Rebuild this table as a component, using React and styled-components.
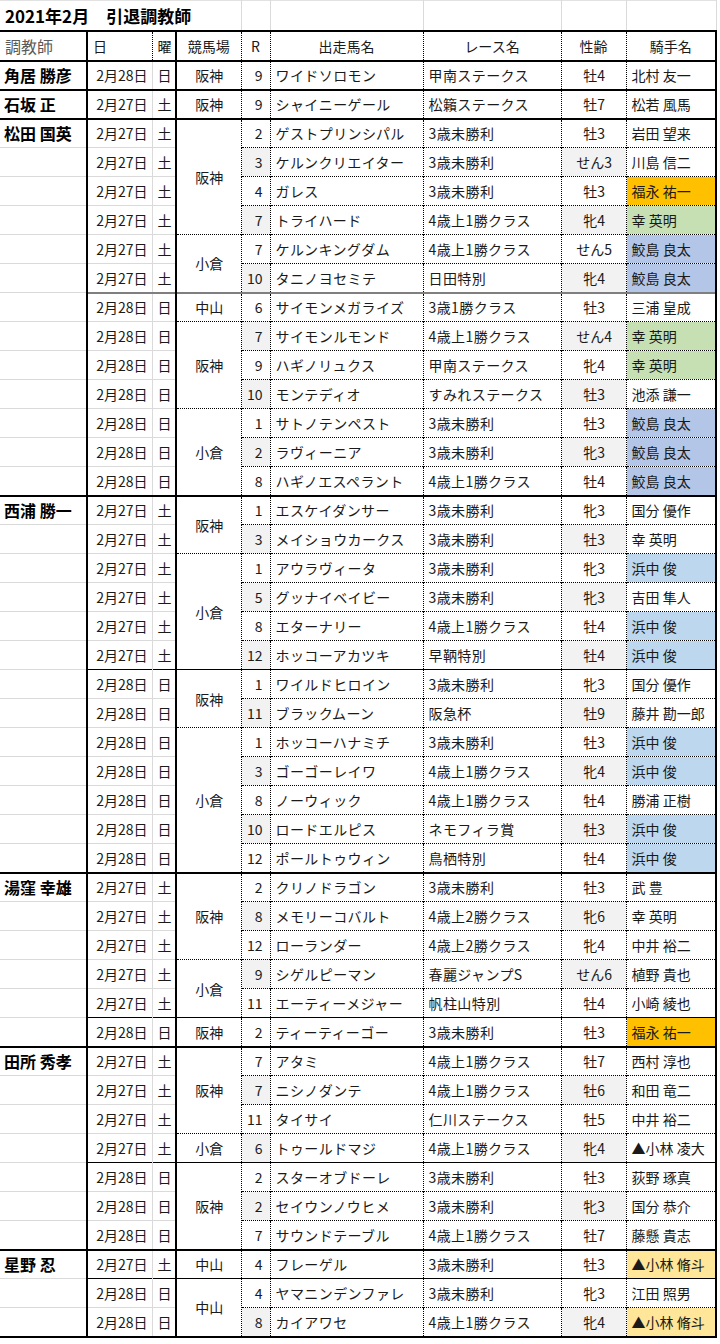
import React from 'react';
import styled, { createGlobalStyle } from 'styled-components';

const GlobalStyle = createGlobalStyle`
  body {
    margin: 0;
    background: #fff;
    font-family: "Noto Sans CJK JP", "Noto Sans", sans-serif;
    color: #1a1a1a;
  }
`;

const widths = [87, 65, 24, 65, 29, 153, 138, 65, 90];
const aligns = ['left', 'right', 'center', 'center', 'right', 'left', 'left', 'center', 'left'];
const rightLines = [
  '2px solid #000',
  '1px solid #dadada',
  '2px solid #000',
  '1px dotted #000',
  '1px dotted #000',
  '1px dotted #000',
  '1px dotted #000',
  '1px dotted #000',
  '2px solid #000',
];
const headRightLines = [
  '2px solid #000',
  '1px dotted #000',
  '2px solid #000',
  '1px dotted #000',
  '1px dotted #000',
  '1px dotted #000',
  '1px dotted #000',
  '1px dotted #000',
  '2px solid #000',
];
const fills = {
  o: '#ffc000',
  g: '#c6e0b4',
  b: '#b4c6e7',
  s: '#bdd7ee',
  y: '#ffe699',
};

const topLine = (col, edge) => {
  if (edge === 'trainer') return '2px solid #000';
  if (edge === 'date' && col > 0) return '1px solid #000';
  if (edge === 'dateStrong' && col > 0) return '2px solid #7f7f7f';
  if (col <= 2) return '1px solid #dadada';
  return '1px dotted #000';
};

const Sheet = styled.table`
  border-collapse: collapse;
  table-layout: fixed;
  width: 716px;
  border-bottom: 2px solid #000;
`;

const Col = styled.col`
  width: ${(p) => p.$w}px;
`;

const Row = styled.tr`
  height: ${(p) => p.$h}px;
`;

const TitleCell = styled.td`
  padding: 0 5px;
  font-size: 17px;
  font-weight: 700;
  color: #000;
  white-space: nowrap;
  border-top: 1px solid #e2e2e2;
  border-right: 1px solid #dadada;
`;

const BlankCell = styled.td`
  border-top: 1px solid #e2e2e2;
  border-right: 1px solid #dadada;
`;

const HeadCell = styled.th`
  padding: 0 5px;
  font-size: 14px;
  font-weight: 400;
  color: ${(p) => (p.$muted ? '#5a5a5a' : '#1a1a1a')};
  font-size: ${(p) => (p.$muted ? 16 : 14)}px;
  text-align: ${(p) => p.$align};
  border-top: 2px solid #000;
  border-right: ${(p) => headRightLines[p.$col]};
  white-space: nowrap;
`;

const Cell = styled.td`
  padding: 0 ${(p) => (p.$col === 4 ? 7 : 4)}px 0 ${(p) => (p.$col === 0 ? 4 : 5)}px;
  font-size: 14px;
  letter-spacing: ${(p) => (p.$col === 5 || p.$col === 6 ? '0.4px' : '0')};
  text-align: ${(p) => aligns[p.$col]};
  vertical-align: middle;
  white-space: nowrap;
  overflow: hidden;
  border-top: ${(p) => topLine(p.$col, p.$edge)};
  border-right: ${(p) => rightLines[p.$col]};
  background: ${(p) => (p.$fill ? fills[p.$fill] : p.$shade ? '#f2f2f2' : '#fff')};
`;

const TrainerName = styled.span`
  font-size: 16px;
  font-weight: 700;
  color: #000;
`;

const data = [
  {
    trainer: '角居 勝彦',
    groups: [
      { date: '2月28日', day: '日', venues: [{ name: '阪神', races: [['9', 'ワイドソロモン', '甲南ステークス', '牡4', '北村 友一']] }] },
    ],
  },
  {
    trainer: '石坂 正',
    groups: [
      { date: '2月27日', day: '土', venues: [{ name: '阪神', races: [['9', 'シャイニーゲール', '松籟ステークス', '牡7', '松若 風馬']] }] },
    ],
  },
  {
    trainer: '松田 国英',
    groups: [
      {
        date: '2月27日',
        day: '土',
        venues: [
          {
            name: '阪神',
            races: [
              ['2', 'ゲストプリンシパル', '3歳未勝利', '牡3', '岩田 望来'],
              ['3', 'ケルンクリエイター', '3歳未勝利', 'せん3', '川島 信二'],
              ['4', 'ガレス', '3歳未勝利', '牡3', '福永 祐一', 'o'],
              ['7', 'トライハード', '4歳上1勝クラス', '牝4', '幸 英明', 'g'],
            ],
          },
          {
            name: '小倉',
            races: [
              ['7', 'ケルンキングダム', '4歳上1勝クラス', 'せん5', '鮫島 良太', 'b'],
              ['10', 'タニノヨセミテ', '日田特別', '牝4', '鮫島 良太', 'b'],
            ],
          },
        ],
      },
      {
        date: '2月28日',
        day: '日',
        strong: true,
        venues: [
          { name: '中山', races: [['6', 'サイモンメガライズ', '3歳1勝クラス', '牡3', '三浦 皇成']] },
          {
            name: '阪神',
            races: [
              ['7', 'サイモンルモンド', '4歳上1勝クラス', 'せん4', '幸 英明', 'g'],
              ['9', 'ハギノリュクス', '甲南ステークス', '牝4', '幸 英明', 'g'],
              ['10', 'モンテディオ', 'すみれステークス', '牡3', '池添 謙一'],
            ],
          },
          {
            name: '小倉',
            races: [
              ['1', 'サトノテンペスト', '3歳未勝利', '牡3', '鮫島 良太', 'b'],
              ['2', 'ラヴィーニア', '3歳未勝利', '牝3', '鮫島 良太', 'b'],
              ['8', 'ハギノエスペラント', '4歳上1勝クラス', '牡4', '鮫島 良太', 'b'],
            ],
          },
        ],
      },
    ],
  },
  {
    trainer: '西浦 勝一',
    groups: [
      {
        date: '2月27日',
        day: '土',
        venues: [
          {
            name: '阪神',
            races: [
              ['1', 'エスケイダンサー', '3歳未勝利', '牝3', '国分 優作'],
              ['3', 'メイショウカークス', '3歳未勝利', '牡3', '幸 英明'],
            ],
          },
          {
            name: '小倉',
            races: [
              ['1', 'アウラヴィータ', '3歳未勝利', '牝3', '浜中 俊', 's'],
              ['5', 'グッナイベイビー', '3歳未勝利', '牝3', '吉田 隼人'],
              ['8', 'エターナリー', '4歳上1勝クラス', '牡4', '浜中 俊', 's'],
              ['12', 'ホッコーアカツキ', '早鞆特別', '牡4', '浜中 俊', 's'],
            ],
          },
        ],
      },
      {
        date: '2月28日',
        day: '日',
        venues: [
          {
            name: '阪神',
            races: [
              ['1', 'ワイルドヒロイン', '3歳未勝利', '牝3', '国分 優作'],
              ['11', 'ブラックムーン', '阪急杯', '牡9', '藤井 勘一郎'],
            ],
          },
          {
            name: '小倉',
            races: [
              ['1', 'ホッコーハナミチ', '3歳未勝利', '牡3', '浜中 俊', 's'],
              ['3', 'ゴーゴーレイワ', '4歳上1勝クラス', '牝4', '浜中 俊', 's'],
              ['8', 'ノーウィック', '4歳上1勝クラス', '牡4', '勝浦 正樹'],
              ['10', 'ロードエルピス', 'ネモフィラ賞', '牡3', '浜中 俊', 's'],
              ['12', 'ポールトゥウィン', '鳥栖特別', '牡4', '浜中 俊', 's'],
            ],
          },
        ],
      },
    ],
  },
  {
    trainer: '湯窪 幸雄',
    groups: [
      {
        date: '2月27日',
        day: '土',
        venues: [
          {
            name: '阪神',
            races: [
              ['2', 'クリノドラゴン', '3歳未勝利', '牡3', '武 豊'],
              ['8', 'メモリーコバルト', '4歳上2勝クラス', '牝6', '幸 英明'],
              ['12', 'ローランダー', '4歳上2勝クラス', '牝4', '中井 裕二'],
            ],
          },
          {
            name: '小倉',
            races: [
              ['9', 'シゲルピーマン', '春麗ジャンプS', 'せん6', '植野 貴也'],
              ['11', 'エーティーメジャー', '帆柱山特別', '牡4', '小崎 綾也'],
            ],
          },
        ],
      },
      {
        date: '2月28日',
        day: '日',
        venues: [{ name: '阪神', races: [['2', 'ティーティーゴー', '3歳未勝利', '牡3', '福永 祐一', 'o']] }],
      },
    ],
  },
  {
    trainer: '田所 秀孝',
    groups: [
      {
        date: '2月27日',
        day: '土',
        venues: [
          {
            name: '阪神',
            races: [
              ['7', 'アタミ', '4歳上1勝クラス', '牡7', '西村 淳也'],
              ['7', 'ニシノダンテ', '4歳上1勝クラス', '牡6', '和田 竜二'],
              ['11', 'タイサイ', '仁川ステークス', '牡5', '中井 裕二'],
            ],
          },
          { name: '小倉', races: [['6', 'トゥールドマジ', '4歳上1勝クラス', '牝4', '▲小林 凌大']] },
        ],
      },
      {
        date: '2月28日',
        day: '日',
        venues: [
          {
            name: '阪神',
            races: [
              ['2', 'スターオブドーレ', '3歳未勝利', '牡3', '荻野 琢真'],
              ['2', 'セイウンノウヒメ', '3歳未勝利', '牝3', '国分 恭介'],
              ['7', 'サウンドテーブル', '4歳上1勝クラス', '牡7', '藤懸 貴志'],
            ],
          },
        ],
      },
    ],
  },
  {
    trainer: '星野 忍',
    groups: [
      {
        date: '2月27日',
        day: '土',
        venues: [{ name: '中山', races: [['4', 'フレーゲル', '3歳未勝利', '牡3', '▲小林 脩斗', 'y']] }],
      },
      {
        date: '2月28日',
        day: '日',
        venues: [
          {
            name: '中山',
            races: [
              ['4', 'ヤマニンデンファレ', '3歳未勝利', '牝3', '江田 照男'],
              ['8', 'カイアワセ', '4歳上1勝クラス', '牝4', '▲小林 脩斗', 'y'],
            ],
          },
        ],
      },
    ],
  },
];

const buildRows = () => {
  const rows = [];
  data.forEach((t) => {
    t.groups.forEach((g, gi) => {
      let idx = 0;
      g.venues.forEach((v) => {
        v.races.forEach((r, ri) => {
          let edge = 'row';
          if (gi === 0 && idx === 0) edge = 'trainer';
          else if (idx === 0) edge = g.strong ? 'dateStrong' : 'date';
          rows.push({
            trainer: gi === 0 && idx === 0 ? t.trainer : '',
            date: g.date,
            day: g.day,
            venue: ri === 0 ? { name: v.name, span: v.races.length } : null,
            race: r,
            shade: idx % 2 === 1,
            edge,
          });
          idx += 1;
        });
      });
    });
  });
  return rows;
};

const headers = ['調教師', '日', '曜', '競馬場', 'R', '出走馬名', 'レース名', '性齢', '騎手名'];
const headAligns = ['left', 'left', 'left', 'center', 'center', 'center', 'center', 'center', 'center'];

const App = () => {
  const rows = buildRows();
  return (
    <>
      <GlobalStyle />
      <Sheet>
        <colgroup>
          {widths.map((w, i) => (
            <Col key={i} $w={w} />
          ))}
        </colgroup>
        <tbody>
          <Row $h={30}>
            <TitleCell colSpan={4}>2021年2月　引退調教師</TitleCell>
            {[4, 5, 6, 7, 8].map((i) => (
              <BlankCell key={i} />
            ))}
          </Row>
          <Row $h={30}>
            {headers.map((h, i) => (
              <HeadCell key={h} $col={i} $align={headAligns[i]} $muted={i === 0}>
                {h}
              </HeadCell>
            ))}
          </Row>
          {rows.map((r, i) => {
            const [num, horse, race, sex, jockey, fill] = r.race;
            return (
              <Row key={i} $h={29}>
                <Cell $col={0} $edge={r.edge}>
                  {r.trainer && <TrainerName>{r.trainer}</TrainerName>}
                </Cell>
                <Cell $col={1} $edge={r.edge}>{r.date}</Cell>
                <Cell $col={2} $edge={r.edge}>{r.day}</Cell>
                {r.venue && (
                  <Cell $col={3} $edge={r.edge} rowSpan={r.venue.span}>
                    {r.venue.name}
                  </Cell>
                )}
                <Cell $col={4} $edge={r.edge} $shade={r.shade}>{num}</Cell>
                <Cell $col={5} $edge={r.edge}>{horse}</Cell>
                <Cell $col={6} $edge={r.edge}>{race}</Cell>
                <Cell $col={7} $edge={r.edge} $shade={r.shade}>{sex}</Cell>
                <Cell $col={8} $edge={r.edge} $fill={fill}>{jockey}</Cell>
              </Row>
            );
          })}
        </tbody>
      </Sheet>
    </>
  );
};

export default App;
